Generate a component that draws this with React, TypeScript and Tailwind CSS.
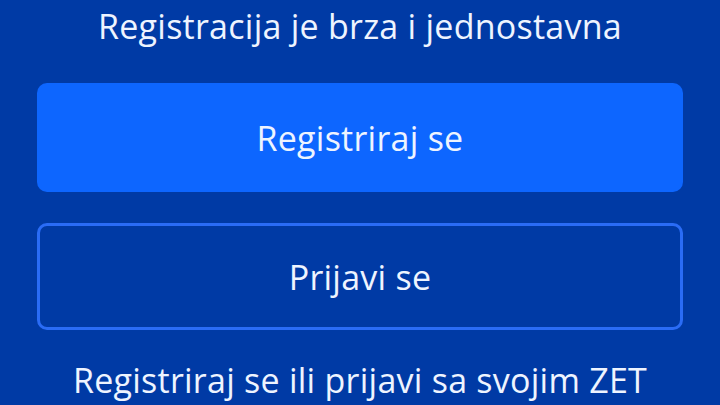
export default function App() {
  return (
    <div
      className="w-[720px] h-[405px] overflow-hidden bg-[#003aa5] text-[#eef4ff] flex flex-col items-center tracking-[0.25px]"
      style={{ fontFamily: '"Open Sans", "Noto Sans", sans-serif' }}
    >
      <p className="mt-[3px] text-[34px] leading-[46px] whitespace-nowrap">Registracija je brza i jednostavna</p>

      <button className="mt-[34px] w-[646px] h-[109px] rounded-[10px] bg-[#0d66ff] text-[34px] leading-[46px] text-[#eef4ff]">
        Registriraj se
      </button>

      <button className="mt-[31px] w-[646px] h-[107px] rounded-[10px] border-[3px] border-[#2a6cf6] text-[34px] leading-[46px] text-[#eef4ff]">
        Prijavi se
      </button>

      <p className="mt-[27px] text-[34px] leading-[46px] whitespace-nowrap">
        Registriraj se ili prijavi sa svojim ZET
      </p>
    </div>
  );
}
